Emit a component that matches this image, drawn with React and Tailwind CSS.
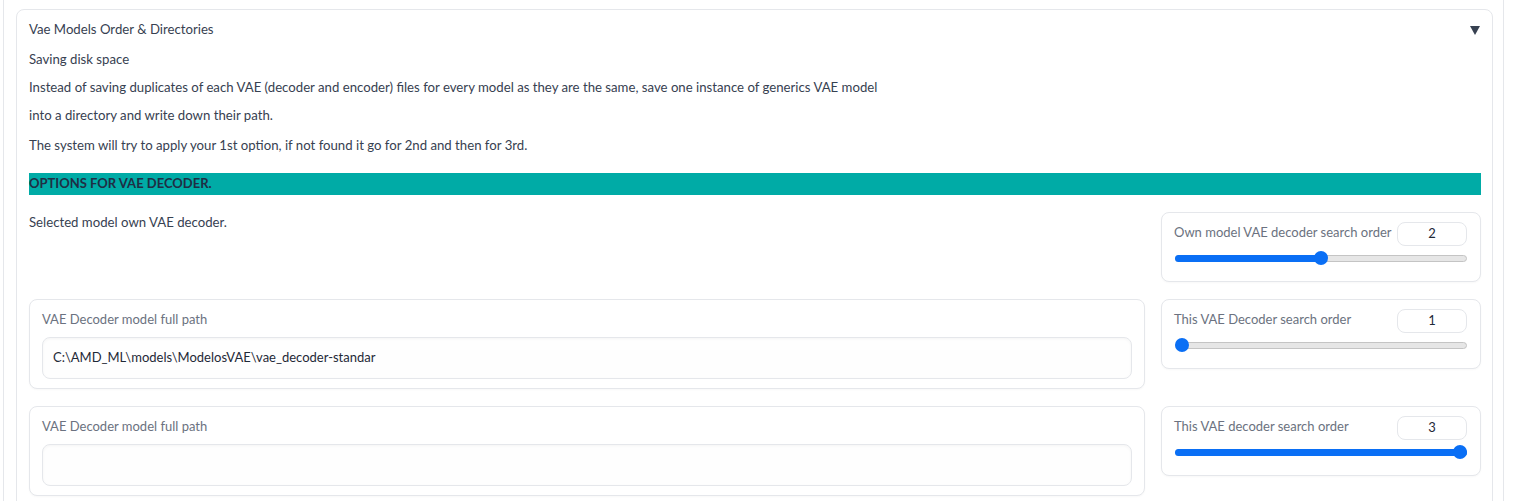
import React from "react";

function Slider({ pct }) {
  return (
    <div className="relative h-[14px] mt-[5px] mx-[1px]">
      <div className="absolute left-0 right-0 top-[4px] h-[7px] rounded-full bg-[#e6e6e6] border border-[#c4c4c4]" />
      <div
        className="absolute left-0 top-[4px] h-[7px] rounded-full bg-[#0a6ff5]"
        style={{ width: `${pct}%` }}
      />
      <div
        className="absolute top-0 w-[14px] h-[14px] rounded-full bg-[#0a6ff5] -translate-x-1/2"
        style={{ left: `calc(7px + (100% - 14px) * ${pct / 100})` }}
      />
    </div>
  );
}

function OrderCard({ label, value, pct }) {
  return (
    <div className="w-[320px] h-[70px] shrink-0 rounded-lg border border-[#e5e7eb] bg-white px-[12px] pt-[9px] shadow-[0_1px_2px_rgba(0,0,0,0.03)]">
      <div className="flex items-start justify-between">
        <span className="text-[13px] leading-[20px] text-[#6b7280]">{label}</span>
        <div className="w-[70px] h-[24px] rounded-lg border border-[#e5e7eb] bg-white flex items-center justify-center text-[13px] text-[#1f2937] mr-[1px]">
          {value}
        </div>
      </div>
      <Slider pct={pct} />
    </div>
  );
}

function PathCard({ value }) {
  return (
    <div className="flex-1 h-[90px] rounded-lg border border-[#e5e7eb] bg-white px-[12px] pt-[9px] shadow-[0_1px_2px_rgba(0,0,0,0.03)]">
      <div className="text-[13px] leading-[20px] text-[#6b7280]">VAE Decoder model full path</div>
      <div className="mt-[8px] h-[42px] rounded-lg border border-[#e5e7eb] bg-[#fefefe] shadow-[inset_0_1px_3px_rgba(0,0,0,0.04)] flex items-center px-[10px] text-[13px] text-[#1f2937]">
        {value}
      </div>
    </div>
  );
}

export default function App() {
  return (
    <div className="w-[1513px] h-[501px] overflow-hidden bg-white">
      <div className="ml-[3px] w-[1501px] h-full border-l border-r border-[#e5e7eb] pt-[9px] font-['Lato',sans-serif]">
        <div className="ml-[12px] mr-[10px] h-[600px] rounded-lg border border-[#e5e7eb] bg-white pl-[12px] pr-[11px] pt-[10px]">
          <div className="flex items-center justify-between h-[20px]">
            <span className="text-[13.2px] text-[#374151]">Vae Models Order &amp; Directories</span>
            <svg width="10" height="9" viewBox="0 0 10 9" className="mr-[1px]">
              <polygon points="0,0 10,0 5,9" fill="#374151" />
            </svg>
          </div>
          <div className="mt-[5px] text-[13.2px] text-[#374151]">
            <div className="h-[28px] leading-[28px]">Saving disk space</div>
            <div className="h-[28px] leading-[28px]">
              Instead of saving duplicates of each VAE (decoder and encoder) files for every model as they are the same, save one instance of generics VAE model
            </div>
            <div className="h-[28px] leading-[28px]">into a directory and write down their path.</div>
            <div className="mt-[2px] h-[28px] leading-[28px]">
              The system will try to apply your 1st option, if not found it go for 2nd and then for 3rd.
            </div>
          </div>
          <div className="mt-[14px] h-[22px] bg-[#00aba6] flex items-center text-[13px] font-bold text-[#1f2e44]">
            OPTIONS FOR VAE DECODER.
          </div>
          <div className="mt-[17px] flex flex-col">
            <div className="flex gap-[16px]">
              <div className="flex-1 text-[13.2px] text-[#374151] leading-[20px]">Selected model own VAE decoder.</div>
              <OrderCard label="Own model VAE decoder search order" value="2" pct={50} />
            </div>
            <div className="mt-[17px] flex gap-[16px] items-start">
              <PathCard value="C:\AMD_ML\models\ModelosVAE\vae_decoder-standar" />
              <OrderCard label="This VAE Decoder search order" value="1" pct={0} />
            </div>
            <div className="mt-[17px] flex gap-[16px] items-start">
              <PathCard value="" />
              <OrderCard label="This VAE decoder search order" value="3" pct={100} />
            </div>
          </div>
        </div>
      </div>
    </div>
  );
}
